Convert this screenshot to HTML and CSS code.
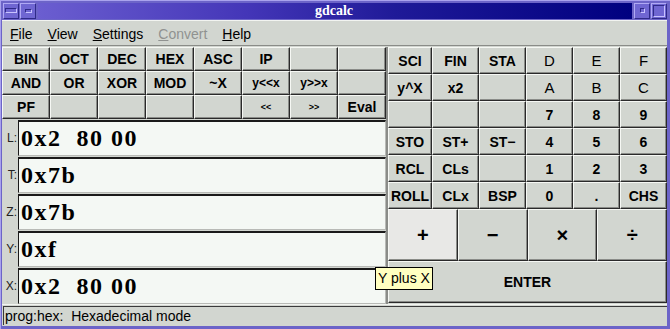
FILE: index.html
```html
<!DOCTYPE html>
<html lang="en">
<head>
  <meta charset="UTF-8">
  <title>gdcalc</title>
  <link rel="stylesheet" href="styles.css">
</head>
<body>
  <div class="window">
    <div class="titlebar">
      <span class="wm-btn"><span class="bar-wide"></span></span>
      <span class="wm-btn"><span class="bar-short"></span></span>
      <span class="title">gdcalc</span>
      <span class="wm-btn"><span class="dot"></span></span>
      <span class="wm-btn"><span class="square"></span></span>
    </div>

    <div class="menubar">
      <span class="menu"><u>F</u>ile</span>
      <span class="menu"><u>V</u>iew</span>
      <span class="menu"><u>S</u>ettings</span>
      <span class="menu disabled"><u>C</u>onvert</span>
      <span class="menu"><u>H</u>elp</span>
    </div>

    <div class="main">
      <div class="left">
        <div class="prog-keys">
          <button class="key">BIN</button>
          <button class="key">OCT</button>
          <button class="key">DEC</button>
          <button class="key">HEX</button>
          <button class="key">ASC</button>
          <button class="key">IP</button>
          <button class="key"></button>
          <button class="key"></button>

          <button class="key">AND</button>
          <button class="key">OR</button>
          <button class="key">XOR</button>
          <button class="key">MOD</button>
          <button class="key">~X</button>
          <button class="key small">y&lt;&lt;x</button>
          <button class="key small">y&gt;&gt;x</button>
          <button class="key"></button>

          <button class="key">PF</button>
          <button class="key"></button>
          <button class="key"></button>
          <button class="key"></button>
          <button class="key"></button>
          <button class="key tiny">&lt;&lt;</button>
          <button class="key tiny">&gt;&gt;</button>
          <button class="key">Eval</button>
        </div>

        <div class="stack">
          <div class="reg"><span class="reg-label">L:</span><div class="reg-value">0x2  80 00</div></div>
          <div class="reg"><span class="reg-label">T:</span><div class="reg-value">0x7b</div></div>
          <div class="reg"><span class="reg-label">Z:</span><div class="reg-value">0x7b</div></div>
          <div class="reg"><span class="reg-label">Y:</span><div class="reg-value">0xf</div></div>
          <div class="reg"><span class="reg-label">X:</span><div class="reg-value">0x2  80 00</div></div>
        </div>
      </div>

      <div class="right">
        <div class="num-keys">
          <button class="key">SCI</button>
          <button class="key">FIN</button>
          <button class="key">STA</button>
          <button class="key light">D</button>
          <button class="key light">E</button>
          <button class="key light">F</button>

          <button class="key">y^X</button>
          <button class="key">x2</button>
          <button class="key"></button>
          <button class="key light">A</button>
          <button class="key light">B</button>
          <button class="key light">C</button>

          <button class="key"></button>
          <button class="key"></button>
          <button class="key"></button>
          <button class="key">7</button>
          <button class="key">8</button>
          <button class="key">9</button>

          <button class="key">STO</button>
          <button class="key">ST+</button>
          <button class="key">ST&minus;</button>
          <button class="key">4</button>
          <button class="key">5</button>
          <button class="key">6</button>

          <button class="key">RCL</button>
          <button class="key">CLs</button>
          <button class="key"></button>
          <button class="key">1</button>
          <button class="key">2</button>
          <button class="key">3</button>

          <button class="key">ROLL</button>
          <button class="key">CLx</button>
          <button class="key">BSP</button>
          <button class="key">0</button>
          <button class="key">.</button>
          <button class="key">CHS</button>
        </div>
        <div class="op-keys">
          <button class="key op hover">+</button>
          <button class="key op">&minus;</button>
          <button class="key op">&times;</button>
          <button class="key op">&divide;</button>
        </div>
        <button class="key enter">ENTER</button>
        <div class="tooltip">Y plus X</div>
      </div>
    </div>

    <div class="statusbar">
      <span class="status-text">prog:hex:  Hexadecimal mode</span>
    </div>
  </div>
</body>
</html>
```

FILE: styles.css
```css
html, body {
  margin: 0;
  padding: 0;
}
body {
  width: 670px;
  height: 329px;
  overflow: hidden;
  background: #2c2670;
  font-family: 'Liberation Sans', Arial, sans-serif;
}
.window {
  width: 670px;
  height: 329px;
  box-sizing: border-box;
  background: #6c64c8;
  border-top: 1px solid #a9a2ee;
  border-left: 1px solid #a9a2ee;
  padding: 0 3px 3px 1px;
  display: flex;
  flex-direction: column;
}
.titlebar {
  height: 19px;
  display: flex;
  align-items: center;
  gap: 1px;
  padding-left: 1px;
}
.wm-btn {
  width: 16px;
  height: 16px;
  box-sizing: border-box;
  background: #6f66d2;
  border: 1px solid;
  border-color: #b0a9f4 #2f2a88 #2f2a88 #b0a9f4;
  display: flex;
  align-items: center;
  justify-content: center;
}
.bar-wide {
  width: 10px;
  height: 3px;
  border: 1px solid;
  border-color: #2f2a88 #c8c2ff #c8c2ff #2f2a88;
}
.bar-short {
  width: 5px;
  height: 2px;
  border: 1px solid;
  border-color: #2f2a88 #c8c2ff #c8c2ff #2f2a88;
}
.dot {
  width: 3px;
  height: 3px;
  border: 1px solid;
  border-color: #2f2a88 #c8c2ff #c8c2ff #2f2a88;
}
.square {
  width: 10px;
  height: 10px;
  border: 1px solid;
  border-color: #2f2a88 #c8c2ff #c8c2ff #2f2a88;
}
.title {
  flex: 1;
  height: 16px;
  margin: 0 1px;
  background: linear-gradient(to right, #6b5ed0 0%, #4436b8 35%, #1f1a98 60%, #000080 100%);
  color: #fff;
  font-family: 'Liberation Serif', 'Times New Roman', serif;
  font-weight: 700;
  font-size: 14px;
  line-height: 16px;
  text-align: center;
  padding-right: 2px;
}
.menubar {
  height: 26px;
  box-sizing: border-box;
  background: #d2d6d0;
  border-top: 1px solid #f2f4f0;
  border-bottom: 1px solid #8a8c88;
  display: flex;
  align-items: center;
  padding: 2px 0 0 7px;
  font-size: 14px;
  color: #000;
}
.menu {
  padding: 0 8px 0 1px;
  margin-right: 6px;
}
.menu.disabled {
  color: #909290;
}
.main {
  flex: 1;
  display: flex;
  background: #d2d6d0;
  padding-top: 1px;
}
.left {
  width: 384px;
  display: flex;
  flex-direction: column;
  border-right: 2px solid #8a8c88;
}
.right {
  flex: 1;
  position: relative;
  display: flex;
  flex-direction: column;
}
.key {
  margin: 0;
  padding: 0;
  font-family: 'Liberation Sans', Arial, sans-serif;
  font-weight: 700;
  font-size: 14px;
  color: #000;
  background: #d2d6d0;
  border: 1px solid;
  border-color: #f6f8f4 #2a2a2a #2a2a2a #f6f8f4;
  box-shadow: inset -1px -1px 0 #8a8c88;
}
.key.small {
  font-size: 12px;
}
.key.tiny {
  font-size: 9px;
}
.key.light {
  font-weight: 400;
  font-size: 15px;
}
.prog-keys {
  display: grid;
  grid-template-columns: repeat(8, 48px);
  grid-template-rows: repeat(3, 24px);
}
.stack {
  display: flex;
  flex-direction: column;
  gap: 1px;
  padding-top: 1px;
}
.reg {
  display: flex;
  align-items: center;
  height: 36px;
}
.reg-label {
  width: 15px;
  font-size: 12px;
  color: #222;
  text-align: right;
  padding-right: 1px;
}
.reg-value {
  flex: 1;
  height: 36px;
  box-sizing: border-box;
  background: #f4f8f4;
  border-top: 2px solid #1a1a1a;
  border-left: 1px solid #1a1a1a;
  border-right: 1px solid #b8bab6;
  border-bottom: 1px solid #b8bab6;
  font-family: 'Liberation Serif', 'Times New Roman', serif;
  font-weight: 700;
  font-size: 24px;
  letter-spacing: 1.5px;
  line-height: 32px;
  padding-left: 2px;
  white-space: pre;
}
.num-keys {
  display: grid;
  grid-template-columns: 44px repeat(5, 1fr);
  grid-template-rows: repeat(6, 27px);
}
.op-keys {
  display: grid;
  grid-template-columns: repeat(4, 1fr);
  height: 52px;
}
.key.op {
  font-size: 20px;
}
.key.hover {
  background: #e8e8e6;
}
.key.enter {
  height: 42px;
  font-size: 14px;
}
.tooltip {
  position: absolute;
  left: -13px;
  top: 220px;
  background: #ffffc0;
  border: 1px solid #000;
  font-size: 14px;
  padding: 2px 2px;
  line-height: 17px;
}
.statusbar {
  height: 22px;
  box-sizing: border-box;
  background: #d2d6d0;
  border-top: 1px solid #f2f4f0;
  padding: 1px 0 0 1px;
}
.status-text {
  display: block;
  height: 19px;
  box-sizing: border-box;
  border-top: 1px solid #3a3a3a;
  border-left: 1px solid #3a3a3a;
  font-size: 14px;
  line-height: 18px;
  padding-left: 1px;
  white-space: pre;
}
```
